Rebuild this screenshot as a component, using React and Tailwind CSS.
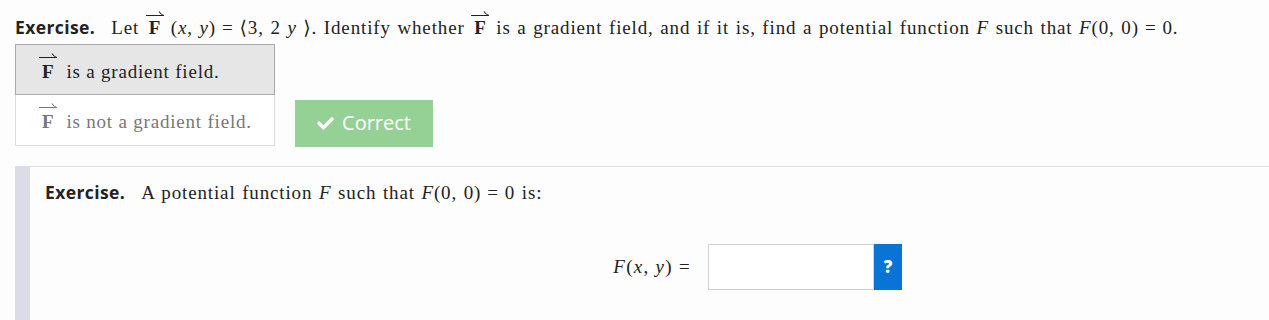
const serif = { fontFamily: '"Liberation Serif", "DejaVu Serif", serif' };

function VecF({ className = "" }) {
    return (
        <span className={"relative inline-block font-bold px-[3px] " + className}>
            F
            <svg className="absolute left-0 -top-[6px] w-full h-[8px]" viewBox="0 0 20 8" preserveAspectRatio="none">
                <path d="M0 5.5 H19 M14 1.5 Q16 4.5 19.5 5.5" stroke="currentColor" strokeWidth="1.1" fill="none" />
            </svg>
        </span>
    );
}

function I({ children }) {
    return <i className="italic">{children}</i>;
}

function Eq() {
    return <span className="mx-[6px]">=</span>;
}

function Ex() {
    return <span className="font-['Open_Sans'] font-bold text-[17.5px] tracking-[0.4px] mr-[16px]">Exercise.</span>;
}

function CheckIcon() {
    return (
        <svg width="17" height="14" viewBox="0 0 512 410" fill="currentColor">
            <path d="M173.9 399.4 7.5 233c-10-10-10-26.2 0-36.2l36.2-36.2c10-10 26.2-10 36.2 0L192 272.7 432.1 32.6c10-10 26.2-10 36.2 0l36.2 36.2c10 10 10 26.2 0 36.2L210.1 399.4c-10 10-26.2 10-36.2 0z" />
        </svg>
    );
}

export default function App() {
    return (
        <div className="min-h-[320px] w-[1269px] bg-[#fdfdfd] text-[#222] overflow-hidden">
            <div className="px-[15px] pt-[15px]">
                <p className="text-[19px] leading-[24px] whitespace-nowrap tracking-[0.86px] [word-spacing:1px]" style={serif}>
                    <Ex />
                    Let <VecF /> (<I>x</I>, <I>y</I>)<Eq />⟨3, 2 <I>y</I> ⟩. Identify whether <VecF /> is a gradient field, and if it is, find a potential function <I>F</I> such that <I>F</I>(0, 0)<Eq />0.
                </p>

                <div className="flex items-end gap-[20px] mt-[4px]">
                    <div className="w-[260px]">
                        <div className="h-[51px] flex items-center pl-[23px] pt-[5px] bg-[#e6e6e6] border border-[#aaaaaa] text-[19px] tracking-[0.8px] text-[#222]" style={serif}>
                            <VecF className="mr-[9px]" />is a gradient field.
                        </div>
                        <div className="h-[51px] flex items-center pl-[23px] pt-[5px] bg-white border border-t-0 border-[#dddddd] text-[19px] tracking-[0.8px] text-[#777]" style={serif}>
                            <VecF className="mr-[9px]" />is not a gradient field.
                        </div>
                    </div>
                    <div className="mb-[-1px] h-[47px] w-[138px] flex items-center justify-center gap-[8px] pb-[1px] bg-[#95d095] text-white text-[20px] font-['Open_Sans']">
                        <CheckIcon />
                        Correct
                    </div>
                </div>
            </div>

            <div className="mt-[20px] ml-[15px] flex">
                <div className="w-[15px] bg-[#dcdce8]" />
                <div className="flex-1 border-t border-[#dcdce8] pl-[15px] pt-[13px] h-[154px]">
                    <p className="text-[19px] leading-[24px] whitespace-nowrap tracking-[0.86px] [word-spacing:1px]" style={serif}>
                        <Ex />
                        A potential function <I>F</I> such that <I>F</I>(0, 0)<Eq />0 is:
                    </p>
                    <div className="flex items-center mt-[39px]">
                        <span className="w-[652px] text-right text-[19px] tracking-[1.3px] mr-[11px]" style={serif}>
                            <I>F</I>(<I>x</I>, <I>y</I>)<Eq />
                        </span>
                        <input className="w-[166px] h-[46px] bg-white border border-[#d0d0d0] outline-none" />
                        <button className="w-[28px] h-[46px] bg-[#0a74d6] text-white font-extrabold text-[17px] font-['Open_Sans']">?</button>
                    </div>
                </div>
            </div>
        </div>
    );
}
